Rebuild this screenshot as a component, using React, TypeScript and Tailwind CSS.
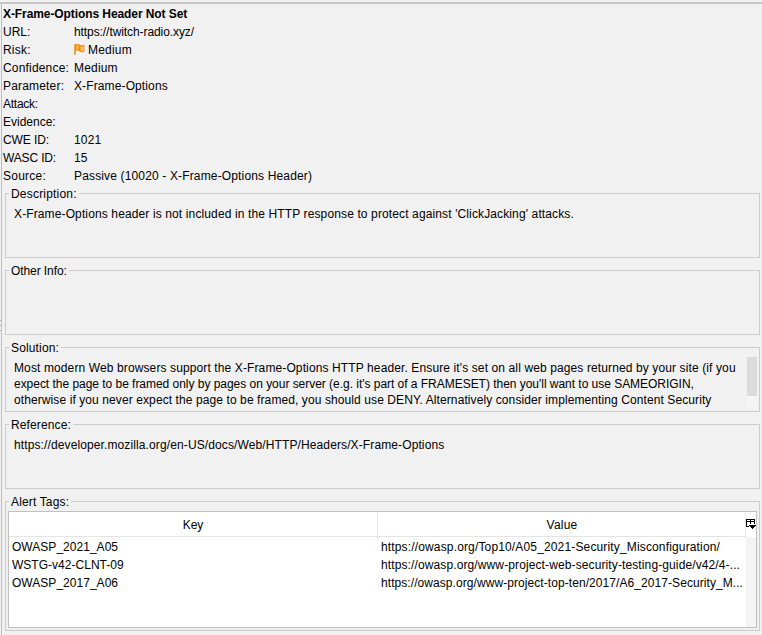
import type { ReactNode } from "react";

type Detail = { label: string; value?: string; labelClass?: string; valueClass?: string; flag?: boolean };

const details: Detail[] = [
  { label: "URL:", value: "https://twitch-radio.xyz/", valueClass: "tracking-[-0.08px]" },
  { label: "Risk:", value: "Medium", flag: true, labelClass: "tracking-[0.2px]", valueClass: "tracking-[0.2px]" },
  { label: "Confidence:", value: "Medium", labelClass: "tracking-[0.18px]", valueClass: "tracking-[0.18px]" },
  { label: "Parameter:", value: "X-Frame-Options", labelClass: "tracking-[0.18px]", valueClass: "tracking-[0.12px]" },
  { label: "Attack:", labelClass: "tracking-[-0.25px]" },
  { label: "Evidence:" },
  { label: "CWE ID:", value: "1021", labelClass: "tracking-[-0.08px]", valueClass: "tracking-[0.15px]" },
  { label: "WASC ID:", value: "15", labelClass: "tracking-[-0.15px]", valueClass: "tracking-[0.15px]" },
  {
    label: "Source:",
    value: "Passive (10020 - X-Frame-Options Header)",
    labelClass: "tracking-[0.25px]",
    valueClass: "tracking-[0.15px]",
  },
];

const tags = [
  {
    key: "OWASP_2021_A05",
    keyClass: "tracking-[0.03px]",
    value: "https://owasp.org/Top10/A05_2021-Security_Misconfiguration/",
    valueClass: "tracking-[0.15px]",
  },
  {
    key: "WSTG-v42-CLNT-09",
    keyClass: "tracking-[0.02px]",
    value: "https://owasp.org/www-project-web-security-testing-guide/v42/4-...",
    valueClass: "tracking-[0.115px]",
  },
  {
    key: "OWASP_2017_A06",
    keyClass: "tracking-[0.03px]",
    value: "https://owasp.org/www-project-top-ten/2017/A6_2017-Security_M...",
    valueClass: "tracking-[0.07px]",
  },
];

function Flag() {
  return (
    <svg width="11" height="12" viewBox="0 0 11 12" className="mr-[3px] mb-[2px] shrink-0">
      <path d="M0.2 1.2C2 0.4 4 0.4 5.4 1.6C6.8 2.6 8.6 2.2 10.4 1.8V8.6C8.6 9.4 6.8 9.4 5.6 8.4C4.2 7.2 3.2 7.4 2 7.6V11.4H0.2Z" fill="#ec8f16" />
      <path d="M1.8 1.9C3 1.5 4 1.7 4.8 2.3V6.6C3.8 6.1 2.8 6.1 1.8 6.4Z" fill="#fbb137" />
      <path d="M6.6 3.5C7.6 3.8 8.6 3.6 9.5 3.3V7.8C8.4 8.2 7.4 8.2 6.6 7.7Z" fill="#fdc566" />
      <path d="M0.2 8H2V11.4H0.2Z" fill="#d9a45e" />
    </svg>
  );
}

function ColumnControl() {
  return (
    <svg width="10" height="11" viewBox="0 0 10 11" shapeRendering="crispEdges" className="shrink-0">
      <path d="M0 0H9V1H0ZM0 1H1V8H0ZM8 1H9V5H8ZM0 2H9V3H0ZM4 1H5V5H4ZM0 7H3V8H0Z" fill="#000" />
      <path d="M3 6H10V7H9V8H8V9H7V10H6V9H5V8H4V7H3Z" fill="#000" />
    </svg>
  );
}

function Panel({
  title,
  titleClass,
  className,
  children,
}: {
  title: string;
  titleClass: string;
  className: string;
  children?: ReactNode;
}) {
  return (
    <section className={`w-[755px] border border-[#cccccc] ${className}`}>
      <h2 className={`ml-[3px] -mt-[9px] h-[18px] w-fit bg-[#f1f1f1] pr-[2px] pl-[2px] ${titleClass}`}>{title}</h2>
      {children}
    </section>
  );
}

export default function App() {
  return (
    <div className="h-[635px] w-[762px] overflow-hidden bg-[#f1f1f1] pt-[2px] font-['Liberation_Sans',Arial,sans-serif] text-[12px] leading-[18px] whitespace-nowrap text-black">
      <div className="flex h-[633px] border-t-2 border-[#c4c4c4]">
        <div className="flex w-[2px] shrink-0 flex-col gap-[4px] border-r border-[#bebebe] pt-[316px]">
          <i className="h-px bg-[#b4b4b4]" />
          <i className="h-px bg-[#b4b4b4]" />
          <i className="h-px bg-[#b4b4b4]" />
        </div>
        <main className="w-[760px] pt-px">
          <h1 className="pl-px font-bold tracking-[-0.085px]">X-Frame-Options Header Not Set</h1>
          <dl className="grid grid-cols-[71px_1fr] pl-px">
            {details.map((d) => (
              <div key={d.label} className="col-span-2 grid h-[18px] grid-cols-subgrid">
                <dt className={d.labelClass}>{d.label}</dt>
                <dd className={`flex items-center ${d.valueClass ?? ""}`}>
                  {d.flag && <Flag />}
                  {d.value}
                </dd>
              </div>
            ))}
          </dl>
          <div className="mt-[8px] flex flex-col gap-[12px] pl-[3px]">
            <Panel title="Description:" titleClass="tracking-[0.2px]" className="h-[65px]">
              <p className="pt-[2px] pl-[8px] tracking-[0.124px]">
                X-Frame-Options header is not included in the HTTP response to protect against 'ClickJacking' attacks.
              </p>
            </Panel>
            <Panel title="Other Info:" titleClass="tracking-[-0.08px]" className="h-[65px]" />
            <Panel title="Solution:" titleClass="tracking-[0.15px]" className="h-[65px]">
              <div className="flex h-[54px] justify-between overflow-hidden pr-[2px] pl-[8px]">
                <div className="pt-[3px] leading-[16px]">
                  <p className="tracking-[0.116px]">
                    Most modern Web browsers support the X-Frame-Options HTTP header. Ensure it's set on all web pages returned by your site (if you
                  </p>
                  <p className="tracking-[-0.03px]">
                    expect the page to be framed only by pages on your server (e.g. it's part of a FRAMESET) then you'll want to use SAMEORIGIN,
                  </p>
                  <p className="tracking-[0.095px]">
                    otherwise if you never expect the page to be framed, you should use DENY. Alternatively consider implementing Content Security
                  </p>
                </div>
                <div className="h-[52px] w-[10px] bg-[#f5f5f5]">
                  <div className="h-[39px] bg-[#dbdbdb]" />
                </div>
              </div>
            </Panel>
            <Panel title="Reference:" titleClass="tracking-[0.12px]" className="h-[65px]">
              <p className="pt-[2px] pl-[8px] tracking-[0.115px]">
                https://developer.mozilla.org/en-US/docs/Web/HTTP/Headers/X-Frame-Options
              </p>
            </Panel>
            <Panel title="Alert Tags:" titleClass="tracking-[0.15px]" className="h-[130px]">
              <div className="ml-[2px] flex h-[117px] w-[749px] border border-[#c0c0c0] bg-white">
                <div className="w-[737px]">
                  <div className="grid h-[25px] grid-cols-[369px_368px] border-b border-[#e4e4e4] text-center leading-[26px]">
                    <div className="border-r border-[#e4e4e4]">Key</div>
                    <div className="border-r border-[#e4e4e4] pl-px tracking-[0.2px]">Value</div>
                  </div>
                  <div className="pt-px">
                    {tags.map((t) => (
                      <div key={t.key} className="grid h-[18px] grid-cols-[369px_368px]">
                        <span className={`pl-[3px] ${t.keyClass}`}>{t.key}</span>
                        <span className={`pl-[3px] ${t.valueClass}`}>{t.value}</span>
                      </div>
                    ))}
                  </div>
                </div>
                <div className="flex w-[10px] flex-col">
                  <div className="flex h-[25px] items-center justify-center">
                    <ColumnControl />
                  </div>
                  <div className="flex-1 bg-[#f4f4f4]" />
                </div>
              </div>
            </Panel>
          </div>
        </main>
      </div>
    </div>
  );
}
